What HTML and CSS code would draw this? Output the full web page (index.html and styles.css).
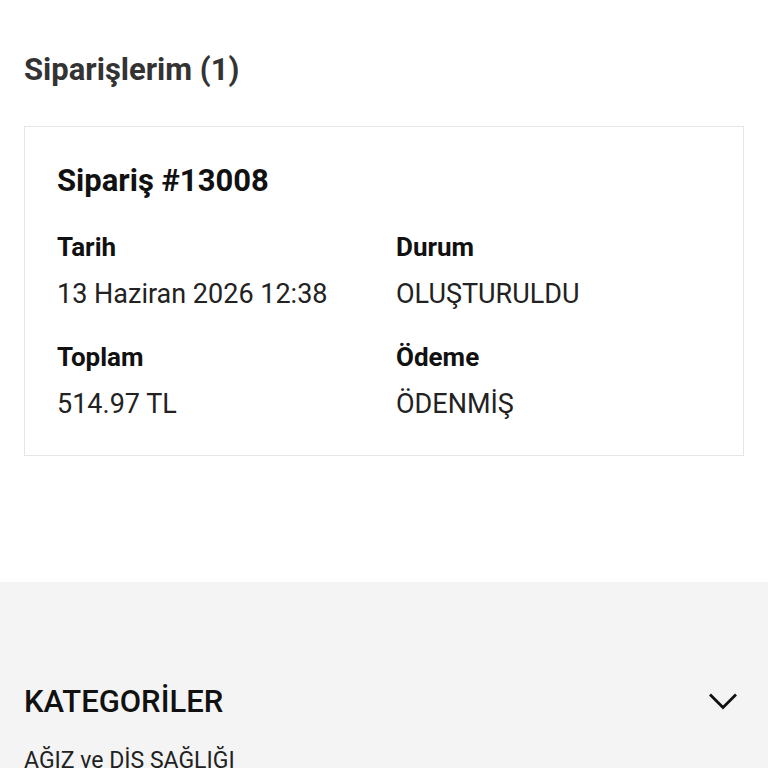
FILE: index.html
```html
<!DOCTYPE html>
<html lang="tr">
<head>
<meta charset="utf-8">
<link rel="stylesheet" href="styles.css">
</head>
<body>
<main class="orders">
  <h1 class="orders-title">Siparişlerim (1)</h1>
  <section class="order-card">
    <h2 class="order-no">Sipariş #13008</h2>
    <div class="order-grid">
      <div class="field">
        <div class="field-label">Tarih</div>
        <div class="field-value">13 Haziran 2026 12:38</div>
      </div>
      <div class="field">
        <div class="field-label">Durum</div>
        <div class="field-value">OLUŞTURULDU</div>
      </div>
      <div class="field">
        <div class="field-label">Toplam</div>
        <div class="field-value">514.97 TL</div>
      </div>
      <div class="field">
        <div class="field-label">Ödeme</div>
        <div class="field-value">ÖDENMİŞ</div>
      </div>
    </div>
  </section>
</main>
<footer class="footer">
  <div class="footer-head">
    <h3 class="footer-title">KATEGORİLER</h3>
    <svg class="chevron" width="30" height="18" viewBox="0 0 30 18"><path d="M2 2.5 L15 15.5 L28 2.5" fill="none" stroke="#111" stroke-width="2.8"/></svg>
  </div>
  <ul class="cat-list">
    <li>AĞIZ ve DİŞ SAĞLIĞI</li>
  </ul>
</footer>
</body>
</html>
```
FILE: styles.css
```css
* { box-sizing: border-box; }
html, body { margin: 0; padding: 0; background: #fff; }
body { font-family: Roboto, "Noto Sans", sans-serif; color: #111; width: 768px; overflow: hidden; }

.orders { padding: 51px 24px 0; height: 582px; }
.orders-title { margin: 0 0 37px; font-size: 31px; font-weight: 700; color: #333; line-height: 38px; }

.order-card { border: 1px solid #e6e6e6; padding: 35px 32px 34px; }
.order-no { margin: 0 0 30px; font-size: 31px; font-weight: 700; line-height: 38px; color: #111; }
.order-grid { display: grid; grid-template-columns: 1fr 1fr; column-gap: 24px; row-gap: 29px; }
.field-label { font-size: 26px; font-weight: 700; line-height: 34px; color: #111; }
.field-value { font-size: 27px; font-weight: 400; line-height: 34px; margin-top: 13px; color: #222; }

.footer { background: #f4f4f4; padding: 100px 24px 0; height: 186px; }
.footer-head { display: flex; justify-content: space-between; align-items: center; }
.footer-title { margin: 0; font-size: 31px; font-weight: 500; line-height: 40px; color: #111; }
.chevron { margin: -2px 6px 0 0; }
.cat-list { list-style: none; margin: 24px 0 0; padding: 0; }
.cat-list li { font-size: 23px; line-height: 30px; color: #222; }
```
